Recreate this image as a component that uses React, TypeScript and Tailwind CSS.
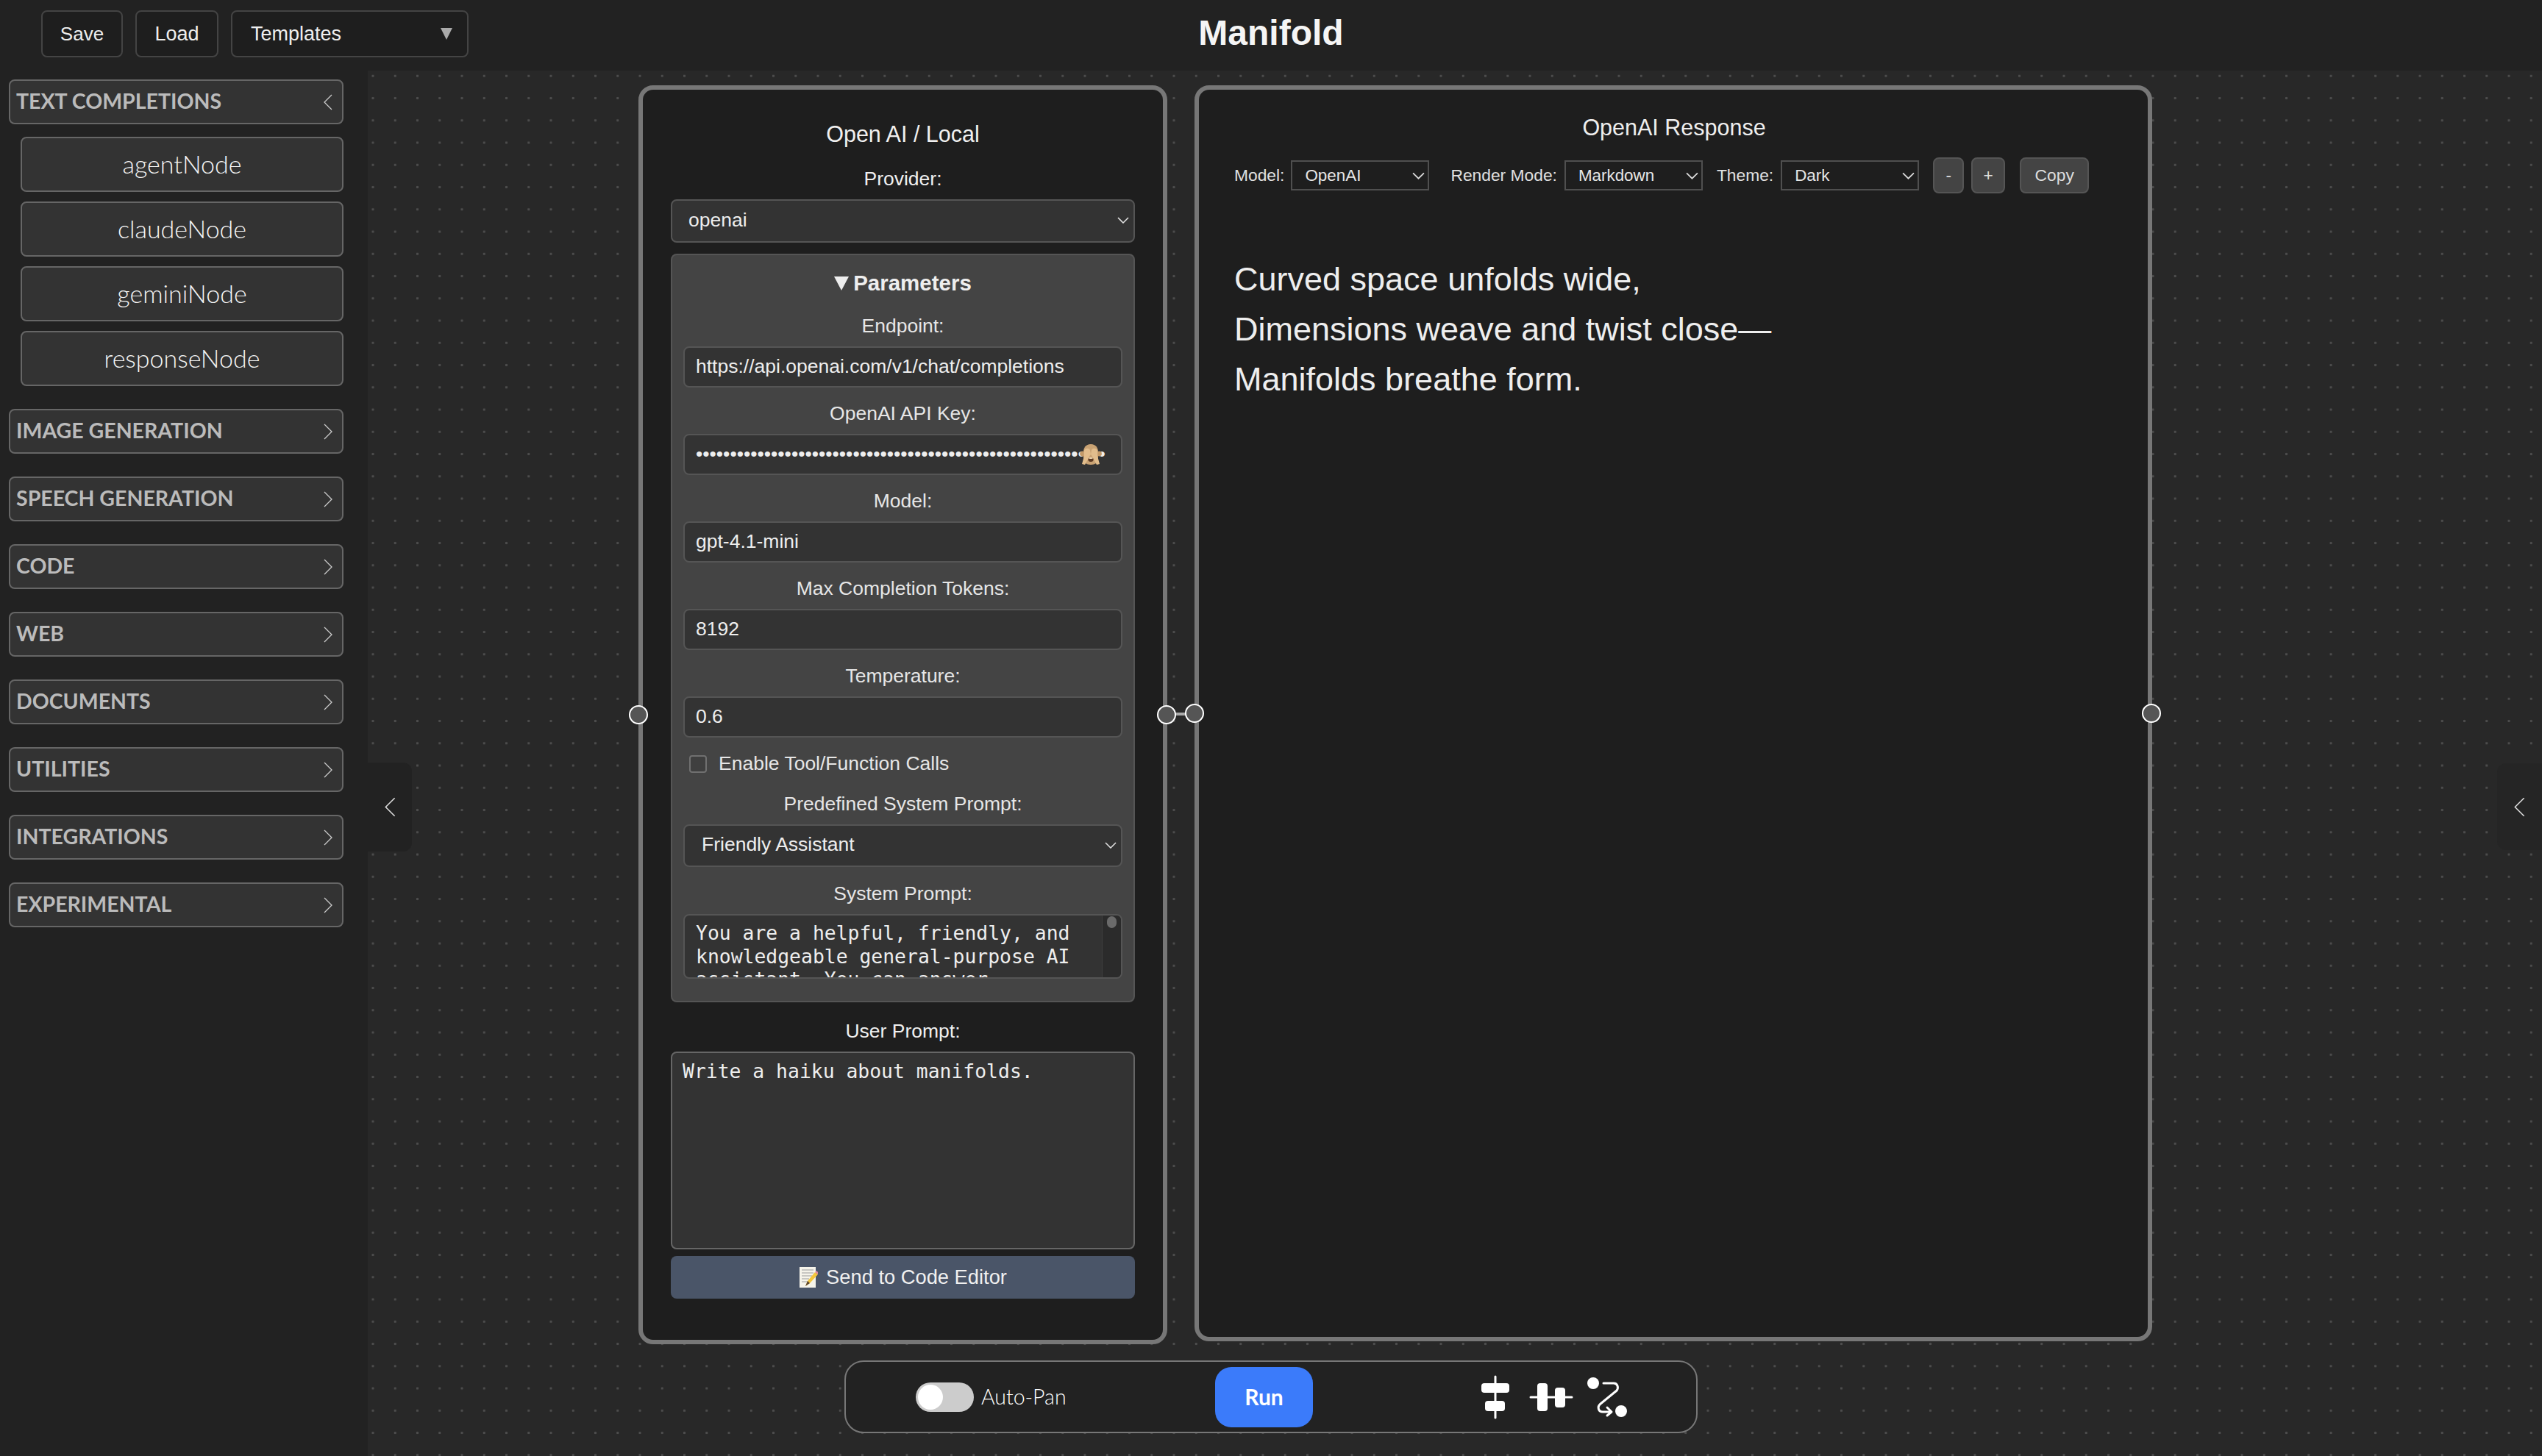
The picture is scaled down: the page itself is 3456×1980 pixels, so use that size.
import React from "react";

const Chev = ({ dir, className = "" }: { dir: "left" | "right" | "down"; className?: string }) => {
  if (dir === "down")
    return (
      <svg className={className} viewBox="0 0 16 9" fill="none" stroke="currentColor" strokeWidth="1.6">
        <path d="M1 1l7 7 7-7" />
      </svg>
    );
  return (
    <svg className={className} viewBox="0 0 12 22" fill="none" stroke="currentColor" strokeWidth="1.3">
      <path d={dir === "right" ? "M1 1l10 10L1 21" : "M11 1L1 11l10 10"} />
    </svg>
  );
};

const Section = ({ title, open = false }: { title: string; open?: boolean }) => (
  <button className="flex h-[61px] w-full items-center justify-between rounded-lg border-2 border-[#666666] bg-[#333333] pl-[8px] pr-[13px] font-['Lato',sans-serif] text-[28.5px] font-bold text-[#bbbbbb]">
    <span className="pb-[3px]">{title}</span>
    <Chev dir={open ? "left" : "right"} className="h-[22px] w-[12px] text-[#cccccc]" />
  </button>
);

const NodeBtn = ({ label }: { label: string }) => (
  <button className="h-[75px] w-full rounded-lg border-2 border-[#666666] bg-[#333333] pb-[2px] font-['Lato',sans-serif] text-[34px] font-light text-[#f5f5f5]">
    {label}
  </button>
);

const Label = ({ text, className = "" }: { text: string; className?: string }) => (
  <label className={`block h-[30px] text-center text-[26.5px] leading-[30px] text-[#e6e6e6] ${className}`}>{text}</label>
);

const Field = ({ label, value, mt }: { label: string; value: string; mt: string }) => (
  <div className={mt}>
    <Label text={label} />
    <input
      readOnly
      value={value}
      className="mt-[13px] block h-[56px] w-full rounded-lg border-2 border-[#555555] bg-[#333333] px-[15px] pb-[2px] text-[26.5px] text-[#eeeeee] outline-none"
    />
  </div>
);

const SmallSelect = ({ value }: { value: string }) => (
  <button className="flex h-[41px] w-[188px] items-center justify-between border-2 border-[#4f4f4f] bg-[#1e1e1e] pl-[17px] pr-[4px] text-[22.4px] text-[#e6e6e6]">
    <span>{value}</span>
    <Chev dir="down" className="h-[10px] w-[17px] text-[#dddddd]" />
  </button>
);

const Monkey = () => (
  <svg viewBox="0 0 30 28" className="h-[28px] w-[30px]">
    <circle cx="3.5" cy="13" r="3.4" fill="#c39a69" />
    <circle cx="26.5" cy="13" r="3.4" fill="#c39a69" />
    <path d="M15 0C8 0 5 5 5 11v9c0 5 4 8 10 8s10-3 10-8v-9c0-6-3-11-10-11z" fill="#c9a273" />
    <path d="M6 8c3-3 6-3 8 0l1 6-1 1-7 13-4-1 3-11z M24 8c-3-3-6-3-8 0l-1 6 1 1 7 13 4-1-3-11z" fill="#e2bd8c" />
    <ellipse cx="15" cy="21" rx="3.6" ry="3" fill="#5d3a22" />
    <ellipse cx="15" cy="19" rx="3" ry="1" fill="#f0d9b5" />
  </svg>
);

const Memo = () => (
  <svg viewBox="0 0 26 28" className="h-[28px] w-[26px]">
    <rect x="1" y="0" width="22" height="28" fill="#f5f3ea" />
    <path d="M4 4h16M4 8h16M4 12h14M4 16h10M4 20h8" stroke="#9a9a9a" strokeWidth="1" />
    <path d="M9 26l3-7L22 7l4 3-11 12z" fill="#f3c53c" />
    <path d="M22 7l2-2 3 3-1 2z" fill="#e58aa0" />
    <path d="M9 26l3-7 3 3z" fill="#5b4632" />
  </svg>
);

const Handle = ({ x, y }: { x: string; y: string }) => (
  <div className={`absolute h-[26px] w-[26px] rounded-full border-2 border-white bg-[#555555] ${x} ${y}`} />
);

export default function App() {
  const password = "•".repeat(60);
  return (
    <div className="flex h-[1980px] w-[3456px] flex-col overflow-hidden bg-[#222222] font-['Liberation_Sans',Arial,sans-serif] text-white">
      <header className="grid h-[96px] shrink-0 grid-cols-[1fr_auto_1fr] items-center pb-[4px]">
        <div className="flex items-center gap-[17px] pl-[56px]">
          <button className="h-[64px] w-[111px] rounded-lg border-2 border-[#444444] bg-[#1e1e1e] text-[26px] text-[#eeeeee]">Save</button>
          <button className="h-[64px] w-[113px] rounded-lg border-2 border-[#444444] bg-[#1e1e1e] text-[27px] text-[#eeeeee]">Load</button>
          <button className="flex h-[64px] w-[323px] items-center justify-between rounded-lg border-2 border-[#444444] bg-[#1e1e1e] pl-[25px] pr-[20px] text-[27px] text-[#eeeeee]">
            <span>Templates</span>
            <span className="h-0 w-0 border-x-[8.5px] border-t-[16px] border-x-transparent border-t-[#aaaaaa]" />
          </button>
        </div>
        <h1 className="pb-[2px] text-[48px] font-bold leading-none text-[#f5f5f5]">Manifold</h1>
        <div />
      </header>

      <main className="flex min-h-0 flex-1">
        <aside className="flex w-[500px] shrink-0 flex-col gap-[31px] pl-[12px] pr-[33px] pt-[12px]">
          <div>
            <Section title="TEXT COMPLETIONS" open />
            <div className="mt-[17px] flex flex-col gap-[13px] pl-[16px]">
              <NodeBtn label="agentNode" />
              <NodeBtn label="claudeNode" />
              <NodeBtn label="geminiNode" />
              <NodeBtn label="responseNode" />
            </div>
          </div>
          <Section title="IMAGE GENERATION" />
          <Section title="SPEECH GENERATION" />
          <Section title="CODE" />
          <Section title="WEB" />
          <Section title="DOCUMENTS" />
          <Section title="UTILITIES" />
          <Section title="INTEGRATIONS" />
          <Section title="EXPERIMENTAL" />
        </aside>

        <section className="relative flex-1 bg-[#282828] bg-[radial-gradient(circle,#4c4c4c_1.4px,transparent_2px)] bg-[length:30.25px_30.25px] bg-[position:-8.125px_22.4px]">
          {/* Open AI / Local node */}
          <div className="absolute left-[368px] top-[20px] h-[1712px] w-[719px] rounded-[20px] border-[6px] border-[#777777] bg-[#1e1e1e] px-[38px] pt-[42px]">
            <h2 className="h-[36px] text-center text-[30.5px] leading-[36px] text-[#f0f0f0]">Open AI / Local</h2>
            <Label text="Provider:" className="mt-[28px] text-[#f0f0f0]" />
            <button className="mt-[13px] flex h-[59px] w-full items-center justify-between rounded-lg border-2 border-[#555555] bg-[#333333] pb-[2px] pl-[22px] pr-[6px] text-[26.5px] text-[#eeeeee]">
              <span>openai</span>
              <Chev dir="down" className="h-[9px] w-[16px] text-[#dddddd]" />
            </button>

            <div className="mt-[15px] h-[1018px] rounded-lg border-2 border-[#555555] bg-[#444444] px-[15px] pt-[22px]">
              <div className="flex h-[32px] items-center justify-center gap-[6px] text-[29.5px] font-bold text-[#eeeeee]">
                <span className="h-0 w-0 border-x-[10px] border-t-[19px] border-x-transparent border-t-[#eeeeee]" />
                <span>Parameters</span>
              </div>
              <Field label="Endpoint:" value="https://api.openai.com/v1/chat/completions" mt="mt-[27px]" />
              <div className="mt-[20px]">
                <Label text="OpenAI API Key:" />
                <div className="relative mt-[13px]">
                  <input
                    readOnly
                    type="password"
                    value={password}
                    className="block h-[56px] w-full rounded-lg border-2 border-[#555555] bg-[#333333] px-[15px] pb-[2px] text-[26.5px] text-[#eeeeee] outline-none"
                  />
                  <div className="absolute left-[539px] top-[14px]">
                    <Monkey />
                  </div>
                </div>
              </div>
              <Field label="Model:" value="gpt-4.1-mini" mt="mt-[20px]" />
              <Field label="Max Completion Tokens:" value="8192" mt="mt-[20px]" />
              <Field label="Temperature:" value="0.6" mt="mt-[20px]" />

              <label className="mt-[24px] flex h-[24px] items-center gap-[16px] pl-[8px] text-[26.5px] text-[#e6e6e6]">
                <input type="checkbox" readOnly className="h-[24px] w-[24px] appearance-none rounded border-2 border-[#707070] bg-[#3f3f3f]" />
                <span>Enable Tool/Function Calls</span>
              </label>

              <Label text="Predefined System Prompt:" className="mt-[27px]" />
              <button className="mt-[13px] flex h-[58px] w-full items-center justify-between rounded-lg border-2 border-[#555555] bg-[#333333] pb-[2px] pl-[23px] pr-[6px] text-[26.5px] text-[#eeeeee]">
                <span>Friendly Assistant</span>
                <Chev dir="down" className="h-[9px] w-[16px] text-[#dddddd]" />
              </button>

              <Label text="System Prompt:" className="mt-[21px]" />
              <div className="mt-[13px] flex h-[88px] overflow-hidden rounded-lg border-2 border-[#555555] bg-[#333333]">
                <textarea
                  readOnly
                  className="h-full min-w-0 flex-1 resize-none overflow-hidden bg-transparent py-[8px] pl-[15px] font-['DejaVu_Sans_Mono',monospace] text-[26.4px] leading-[31.6px] text-[#eeeeee] outline-none"
                  value="You are a helpful, friendly, and knowledgeable general-purpose AI assistant. You can answer"
                />
                <div className="w-[26px] shrink-0 border-l border-[#3d3d3d] bg-[#2b2b2b] px-[6px] pt-[1px]">
                  <div className="h-[16px] rounded-full bg-[#6a6a6a]" />
                </div>
              </div>
            </div>

            <Label text="User Prompt:" className="mt-[24px] text-[#f0f0f0]" />
            <textarea
              readOnly
              value="Write a haiku about manifolds."
              className="mt-[13px] block h-[269px] w-full resize-none rounded-lg border-2 border-[#666666] bg-[#333333] px-[14px] py-[9px] font-['DejaVu_Sans_Mono',monospace] text-[26.4px] leading-[32px] text-[#eeeeee] outline-none"
            />
            <button className="mt-[9px] flex h-[58px] w-full items-center justify-center gap-[11px] rounded-lg bg-[#4a5568] text-[27.3px] text-[#f0f0f0]">
              <Memo />
              <span>Send to Code Editor</span>
            </button>
          </div>

          {/* Response node */}
          <div className="absolute left-[1124px] top-[20px] h-[1708px] w-[1302px] rounded-[20px] border-[6px] border-[#777777] bg-[#1e1e1e] pl-[48px] pt-[33px]">
            <h2 className="h-[36px] pr-[46px] text-center text-[30.5px] leading-[36px] text-[#eeeeee]">OpenAI Response</h2>
            <div className="mt-[23px] flex h-[49px] items-center text-[22.8px] text-[#e0e0e0]">
              <span className="mr-[9px]">Model:</span>
              <SmallSelect value="OpenAI" />
              <span className="ml-[29px] mr-[10px]">Render Mode:</span>
              <SmallSelect value="Markdown" />
              <span className="ml-[19px] mr-[10px]">Theme:</span>
              <SmallSelect value="Dark" />
              <button className="ml-[19px] h-[49px] w-[42px] rounded-lg border-2 border-[#555555] bg-[#444444] text-[#dddddd]">-</button>
              <button className="ml-[10px] h-[49px] w-[46px] rounded-lg border-2 border-[#555555] bg-[#444444] text-[#dddddd]">+</button>
              <button className="ml-[20px] h-[49px] w-[94px] rounded-lg border-2 border-[#555555] bg-[#444444] text-[#dddddd]">Copy</button>
            </div>
            <div className="mt-[83px] text-[45px] leading-[68px] text-[#eeeeee]">
              <p>Curved space unfolds wide,</p>
              <p>Dimensions weave and twist close—</p>
              <p>Manifolds breathe form.</p>
            </div>
          </div>

          {/* Edge and handles */}
          <div className="absolute left-[1086px] top-[873px] h-[4px] w-[38px] bg-[#aaaaaa]" />
          <Handle x="left-[355px]" y="top-[863px]" />
          <Handle x="left-[1073px]" y="top-[863px]" />
          <Handle x="left-[1111px]" y="top-[861px]" />
          <Handle x="left-[2412px]" y="top-[861px]" />

          {/* Collapse tabs */}
          <button className="absolute left-0 top-[941px] flex h-[121px] w-[60px] items-center justify-end rounded-r-xl bg-[#222222] pr-[22px] text-[#dddddd]">
            <Chev dir="left" className="h-[27px] w-[15px]" />
          </button>
          <button className="absolute right-0 top-[942px] flex h-[118px] w-[61px] items-center justify-start rounded-l-xl bg-[#252525] pl-[23px] text-[#dddddd]">
            <Chev dir="left" className="h-[27px] w-[15px]" />
          </button>

          {/* Bottom toolbar */}
          <div className="absolute left-[648px] top-[1754px] flex h-[99px] w-[1160px] items-center rounded-[26px] border-2 border-[#777777] bg-[#222222] pl-[95px]">
            <div className="flex h-[40px] w-[79px] items-center rounded-full bg-[#cccccc] pl-[3px]">
              <div className="h-[34px] w-[34px] rounded-full bg-white" />
            </div>
            <span className="ml-[10px] w-[118px] font-['Lato',sans-serif] text-[28.5px] font-light text-white">Auto-Pan</span>
            <button className="ml-[200px] h-[82px] w-[133px] rounded-[22px] bg-[#3b7bfa] font-['Lato',sans-serif] text-[30px] font-bold text-white">Run</button>
            <svg className="ml-[226px] h-[60px] w-[205px]" viewBox="2010 1870 205 60" fill="none">
              <path d="M2032 1872v56" stroke="#fff" strokeWidth="3" strokeLinecap="round" />
              <rect x="2013" y="1881" width="38" height="13" rx="4" fill="#fff" />
              <rect x="2018" y="1905" width="27" height="14" rx="4" fill="#fff" />
              <path d="M2080 1900h56" stroke="#fff" strokeWidth="3" strokeLinecap="round" />
              <rect x="2089" y="1881" width="14" height="38" rx="4" fill="#fff" />
              <rect x="2113" y="1887" width="14" height="27" rx="4" fill="#fff" />
              <circle cx="2165" cy="1881" r="8" fill="#fff" />
              <circle cx="2203" cy="1919" r="8" fill="#fff" />
              <path d="M2179 1881h14c5 0 7 6 4 10l-22 18c-5 4-3 11 3 11h11m-5-6l6 6-6 5" stroke="#fff" strokeWidth="3" strokeLinecap="round" strokeLinejoin="round" />
            </svg>
          </div>
        </section>
      </main>
    </div>
  );
}
